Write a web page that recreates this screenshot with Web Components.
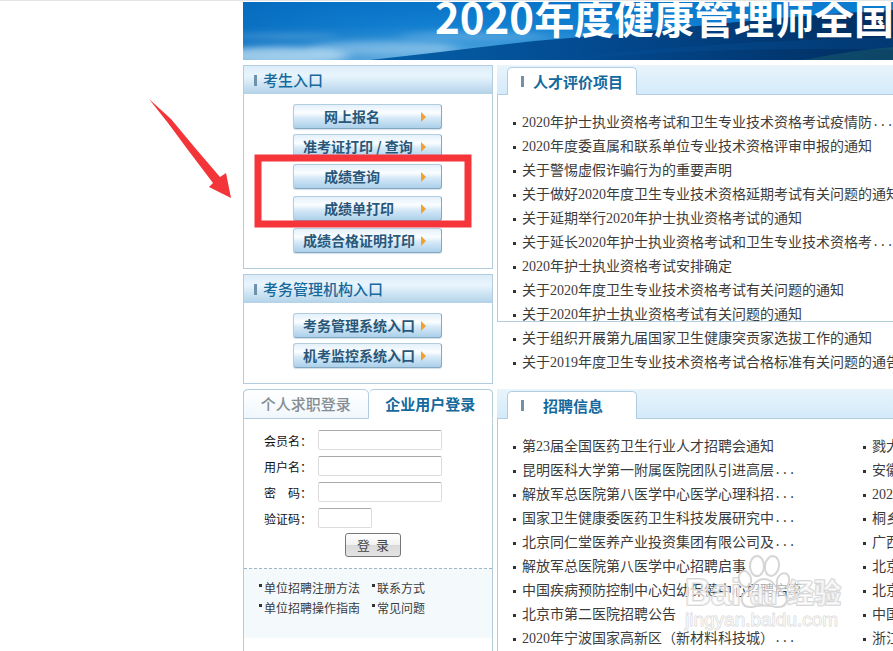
<!DOCTYPE html>
<html lang="zh-CN">
<head>
<meta charset="utf-8">
<title>2020年度健康管理师全国考试</title>
<style>
:root{--line:#b3cde0;--blue:#14699d;--ink:#3c3c3c}
*{box-sizing:border-box}
html,body{margin:0;background:#fff;overflow-x:hidden}
body{position:relative;min-height:100vh;overflow-y:hidden;color:var(--ink);font:14px/24px "Liberation Serif","Noto Sans CJK SC",sans-serif;border-top:1px solid #e4e4e4}
a{color:inherit;text-decoration:none}
.page{padding:1px 0 0 243px;max-width:1243px;height:calc(100vh - 1px);overflow:hidden}
.columns{display:flex;align-items:flex-start;gap:4px;padding-top:5px}
.side{flex:none;width:250px;display:flex;flex-direction:column;gap:5px}
.main{flex:1;min-width:0;display:flex;flex-direction:column;gap:14px}
</style>
</head>
<body>
<div class="page">
  <site-banner><span slot="year">2020</span>年度健康管理师全国</site-banner>
  <div class="columns">
    <div class="side">
      <entry-panel heading="考生入口">
        <entry-link class="short">网上报名</entry-link>
        <entry-link>准考证打印 / 查询</entry-link>
        <entry-link class="short">成绩查询</entry-link>
        <entry-link class="short roomy">成绩单打印</entry-link>
        <entry-link class="roomy">成绩合格证明打印</entry-link>
      </entry-panel>
      <entry-panel heading="考务管理机构入口">
        <entry-link>考务管理系统入口</entry-link>
        <entry-link>机考监控系统入口</entry-link>
      </entry-panel>
      <login-panel></login-panel>
    </div>
    <div class="main">
      <news-panel heading="人才评价项目" class="short-frame">
        <news-list>
          <news-item more>2020年护士执业资格考试和卫生专业技术资格考试疫情防</news-item>
          <news-item>2020年度委直属和联系单位专业技术资格评审申报的通知</news-item>
          <news-item>关于警惕虚假诈骗行为的重要声明</news-item>
          <news-item>关于做好2020年度卫生专业技术资格延期考试有关问题的通知</news-item>
          <news-item>关于延期举行2020年护士执业资格考试的通知</news-item>
          <news-item more>关于延长2020年护士执业资格考试和卫生专业技术资格考</news-item>
          <news-item>2020年护士执业资格考试安排确定</news-item>
          <news-item>关于2020年度卫生专业技术资格考试有关问题的通知</news-item>
          <news-item>关于2020年护士执业资格考试有关问题的通知</news-item>
          <news-item>关于组织开展第九届国家卫生健康突贡家选拔工作的通知</news-item>
          <news-item>关于2019年度卫生专业技术资格考试合格标准有关问题的通告</news-item>
        </news-list>
      </news-panel>
      <news-panel heading="招聘信息" class="centered">
        <news-list>
          <news-item>第23届全国医药卫生行业人才招聘会通知</news-item>
          <news-item more>昆明医科大学第一附属医院团队引进高层</news-item>
          <news-item more>解放军总医院第八医学中心医学心理科招</news-item>
          <news-item more>国家卫生健康委医药卫生科技发展研究中</news-item>
          <news-item more>北京同仁堂医养产业投资集团有限公司及</news-item>
          <news-item>解放军总医院第八医学中心招聘启事</news-item>
          <news-item>中国疾病预防控制中心妇幼保健中心招聘启事</news-item>
          <news-item>北京市第二医院招聘公告</news-item>
          <news-item more>2020年宁波国家高新区（新材料科技城）</news-item>
        </news-list>
        <news-list>
          <news-item>戮大</news-item>
          <news-item>安徽</news-item>
          <news-item>2020</news-item>
          <news-item>桐乡</news-item>
          <news-item>广西</news-item>
          <news-item>北京</news-item>
          <news-item>北京</news-item>
          <news-item>中国</news-item>
          <news-item>浙江</news-item>
        </news-list>
      </news-panel>
    </div>
  </div>
</div>
<guide-marks></guide-marks>
<corner-mark></corner-mark>

<script>
const define = (name, html, setup) => customElements.define(name, class extends HTMLElement {
  connectedCallback() {
    if (this.shadowRoot) return;
    const root = this.attachShadow({mode: "open"});
    root.innerHTML = "<style>*{box-sizing:border-box}a{color:inherit;text-decoration:none}</style>" + html;
    if (setup) setup(this, root);
  }
});
const setHeading = (host, root) => { root.querySelector("h2").textContent = host.getAttribute("heading"); };

define("site-banner", `<style>
:host{display:block;position:relative;height:58px;overflow:hidden;background:linear-gradient(#0873c7,#1582d2 40%,#4ba3de 75%,#7fbfe8)}
svg{display:block;position:absolute;inset:0;width:100%;height:100%}
h1{position:relative;margin:0;padding-left:192px;font:bold 40px/28px "Noto Sans CJK SC",sans-serif;color:#fff;white-space:nowrap}
::slotted(span){font-size:42px}
</style>
<svg viewBox="0 0 650 58" preserveAspectRatio="none" aria-hidden="true">
<defs>
<linearGradient id="sea" x1="0" x2="1"><stop offset="0" stop-color="#0561a8"/><stop offset=".4" stop-color="#034b92"/><stop offset="1" stop-color="#012d5f"/></linearGradient>
<linearGradient id="top" x1="0" x2="1"><stop offset="0" stop-color="#0568ba" stop-opacity=".7"/><stop offset=".3" stop-color="#0a76ca" stop-opacity=".2"/><stop offset="1" stop-color="#0b80d4" stop-opacity=".8"/></linearGradient>
<filter id="soft" x="-20%" y="-80%" width="140%" height="260%"><feGaussianBlur stdDeviation="7 3"/></filter>
</defs>
<rect width="650" height="58" fill="url(#top)"/>
<g filter="url(#soft)" fill="#cbe7f7"><ellipse cx="35" cy="54" rx="70" ry="9" opacity=".7"/><ellipse cx="140" cy="46" rx="75" ry="7" opacity=".4"/><ellipse cx="40" cy="34" rx="55" ry="2" opacity=".3"/><ellipse cx="230" cy="34" rx="75" ry="4" opacity=".25"/></g>
<path d="M127 58C210 49 290 37 370 33C465 22 560 13 650 8V58Z" fill="url(#sea)"/>
<path d="M300 58Q470 39 650 35V48Q470 44 330 58Z" fill="#075097" opacity=".35"/>
<path d="M560 58Q610 48 650 45V58Z" fill="#1d646f" opacity=".45"/>
</svg><h1><slot name="year"></slot><slot></slot></h1>`);

define("entry-panel", `<style>
:host{display:block;border:1px solid var(--line)}
header{display:flex;align-items:center;gap:6px;height:28px;padding-left:10px;background:linear-gradient(#dcecf8,#e9f5fd 35%,#cfe5f4 65%,#b3d2e8)}
header::before{content:"";width:3px;height:11px;background:#6f91aa}
h2{margin:0;font:500 15px/26px "Noto Sans CJK SC",sans-serif;color:var(--blue)}
nav{display:flex;flex-direction:column;align-items:flex-start;gap:5px;padding:10px 0 15px 49px}
</style><header><h2></h2></header><nav><slot></slot></nav>`, setHeading);

define("entry-link", `<style>
:host{display:block;width:149px}
:host(.roomy){margin-top:2px}
a{display:flex;align-items:center;height:25px;padding:0 14px 0 9px;border:1px solid #b2cde0;border-right-color:#86a9c2;border-bottom-color:#86a9c2;border-radius:3px;background:linear-gradient(#e3f0fa,#fcfeff 35%,#d7eaf7 55%,#abd0ea);box-shadow:0 1px 1px #d4dfe8;font:bold 14px/22px "Noto Sans CJK SC",sans-serif;color:#295779;white-space:nowrap}
:host(.short) a{padding-left:30px}
span{padding-bottom:2px}
svg{flex:none;width:6px;height:10px;margin-left:auto}
</style><a href="#"><span><slot></slot></span><svg viewBox="0 0 6 10" aria-hidden="true"><path d="M0 0L5 5L0 10Z" fill="#f0a02e"/></svg></a>`);

define("login-panel", `<style>
:host{display:block;border:1px solid var(--line);border-top:0;border-radius:5px 5px 0 0;font:12px/20px "Noto Sans CJK SC",sans-serif;color:#111;min-height:290px}
.tabs{display:flex;margin:0 -1px}
button{font:inherit}
.tabs button{flex:1;height:30px;padding:0;border:1px solid var(--line);border-radius:5px 5px 0 0;background:linear-gradient(#fff,#f0f7fc);font:500 15px/28px "Noto Sans CJK SC",sans-serif;color:#858d93}
.tabs button.on{border-bottom-color:#fff;background:#fff;border-left-width:0;font-weight:bold;color:var(--blue)}
form{display:grid;grid-template-columns:54px 124px;row-gap:6px;padding:11px 0 11px 20px}
label{line-height:22px;height:20px;white-space:pre}
input{display:block;width:124px;height:20px;margin:0;border:1px solid #dcdcdc;border-top-color:#aaa;border-radius:2px;background:#fff;padding:0 3px;font:12px/18px "Noto Sans CJK SC",sans-serif}
input.code{width:54px}
.go{grid-column:1/-1;justify-self:start;width:56px;height:24px;margin:-1px 0 0 81px;padding:0;border:1px solid #777;border-radius:3px;background:linear-gradient(#fff,#f1f1f1 50%,#dadada 52%,#e4e4e4);color:#444;font-size:13px;line-height:20px;white-space:pre}
.help{display:grid;grid-template-columns:113px 1fr;padding:9px 0 20px 15px;border-top:1px dashed #9fb5c3;background:#f4f9fc;color:#3c3c3c}
.help a{display:flex;gap:2px}
.help a::before{content:"";width:3px;height:3px;margin-top:6px;background:#333}
</style>
<div class="tabs"><button type="button">个人求职登录</button><button type="button" class="on">企业用户登录</button></div>
<form><label for="member">会员名：</label><input id="member"><label for="user">用户名：</label><input id="user"><label for="pass">密　码：</label><input id="pass" type="password"><label for="code">验证码：</label><input id="code" class="code"><button type="button" class="go">登  录</button></form>
<div class="help"><a href="#">单位招聘注册方法</a><a href="#">联系方式</a><a href="#">单位招聘操作指南</a><a href="#">常见问题</a></div>`);

define("news-panel", `<style>
:host{display:block}
header{display:flex;align-items:flex-end;height:30px;padding-left:10px;border-bottom:1px solid var(--line);background:linear-gradient(#e9f4fb,#d4eafa)}
.tab{display:flex;align-items:center;width:130px;height:28px;margin-bottom:-1px;padding-left:13px;border:1px solid var(--line);border-bottom:0;border-radius:5px 5px 0 0;background:#fff}
.tab::before{content:"";width:3px;height:11px;background:#6f91aa}
h2{margin:0 0 0 9px;font:bold 15px/28px "Noto Sans CJK SC",sans-serif;color:var(--blue)}
:host(.centered) h2{margin-left:19px}
.body{display:grid;grid-template-columns:350px 350px;padding:16px 0 0 15px;border-left:1px solid var(--line)}
:host(.short-frame) .body{border-left:0;padding-left:16px;background:linear-gradient(var(--line),var(--line)) 0 0/1px 226px no-repeat,linear-gradient(var(--line),var(--line)) 0 226px/100% 1px no-repeat}
</style><header><div class="tab"><h2></h2></div></header><div class="body"><slot></slot></div>`, setHeading);

define("news-list", `<style>:host{display:block}div{display:flex;flex-direction:column}</style><div role="list"><slot></slot></div>`);

define("news-item", `<style>
:host{display:block;height:24px}
a{display:flex;align-items:center;white-space:nowrap;line-height:24px}
a::before{content:"";flex:none;width:3px;height:3px;margin-right:6px;background:#333}
.dots{font-family:"Liberation Mono",monospace;font-size:12px}
</style><a href="#"><slot></slot></a>`, (host, root) => {
  host.setAttribute("role", "listitem");
  if (host.hasAttribute("more")) root.querySelector("a").insertAdjacentHTML("beforeend", '<span class="dots">...</span>');
});

define("guide-marks", `<style>
:host{position:absolute;left:0;top:0;pointer-events:none}
svg{display:block;width:480px;height:240px}
</style><svg viewBox="0 0 480 240" aria-hidden="true"><path d="M149 98L171 118L196 148L220 176L226 172L231 197L209 186L213 182L188 149L168 122Z" fill="#f3353a"/><rect x="258" y="157" width="210" height="66" fill="none" stroke="#f6353b" stroke-width="7"/></svg>`);

define("corner-mark", `<style>
:host{position:absolute;left:680px;top:549px;pointer-events:none}
svg{display:block;width:180px;height:86px}
text{font-family:"Liberation Sans","Noto Sans CJK SC",sans-serif;paint-order:stroke;stroke-linejoin:round}
.big{font-weight:bold}
</style><svg viewBox="0 0 180 86" aria-hidden="true">
<g fill="#fff" fill-opacity=".6" stroke="#d2d2d2" stroke-opacity=".9" stroke-width="2">
<text class="big" x="5" y="55" font-size="36">Bai</text><text class="big" x="107" y="53" font-size="27">经验</text>
<ellipse cx="65" cy="29" rx="6" ry="8" transform="rotate(-15 65 29)"/><ellipse cx="77" cy="16" rx="7" ry="10"/><ellipse cx="92" cy="16" rx="7" ry="10" transform="rotate(10 92 16)"/><ellipse cx="103" cy="31" rx="6" ry="8" transform="rotate(20 103 31)"/>
<path d="M84 29C76 29 74 36 67 41C58 47 61 58 72 57Q84 54 96 57C108 58 110 47 101 41C94 36 92 29 84 29Z"/>
<text class="big" x="70" y="54" font-size="22">du</text>
<text x="5" y="76" font-size="19" stroke-width="1">jingyan.baidu.com</text>
</g></svg>`);
</script>
</body>
</html>
